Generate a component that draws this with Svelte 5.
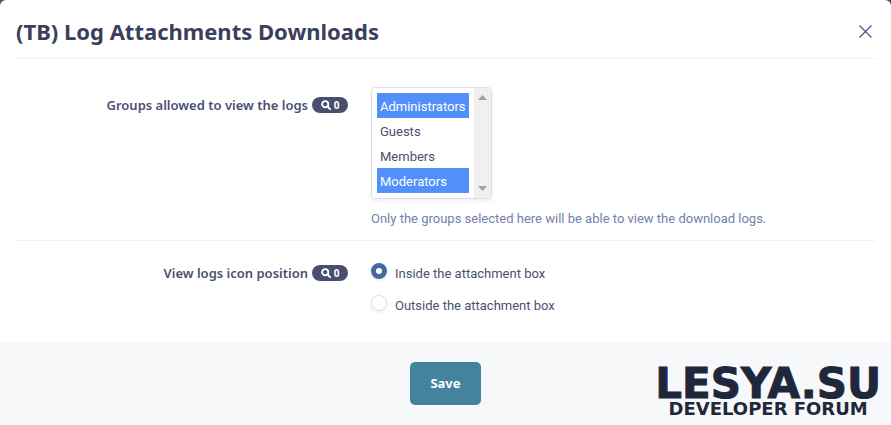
<script>
	let groups = ["Administrators", "Guests", "Members", "Moderators"];
	let selected = $state(["Administrators", "Moderators"]);
	let position = $state("inside");

	let positions = [
		{ value: "inside", label: "Inside the attachment box" },
		{ value: "outside", label: "Outside the attachment box" }
	];
</script>

{#snippet badge()}
	<span class="badge">
		<svg width="10" height="10" viewBox="0 0 10 10" aria-hidden="true">
			<circle cx="4.2" cy="4.2" r="3.1" fill="none" stroke="#fff" stroke-width="1.9" />
			<path d="M6.4 6.4 9.1 9.1" stroke="#fff" stroke-width="2" stroke-linecap="round" />
		</svg>0
	</span>
{/snippet}

<main>
	<form class="dialog" onsubmit={(e) => e.preventDefault()}>
		<header>
			<h1>(TB) Log Attachments Downloads</h1>
			<button type="button" class="close" aria-label="Close">
				<svg width="15" height="15" viewBox="0 0 15 15">
					<path d="M1.5 1.5 13.5 13.5M13.5 1.5 1.5 13.5" fill="none" stroke="#4f568a" stroke-width="1.3" />
				</svg>
			</button>
		</header>

		<div class="row">
			<div class="label">
				<label for="groups">Groups allowed to view the logs</label>
				{@render badge()}
			</div>
			<div class="field">
				<div class="listbox">
					<select id="groups" multiple size="4" bind:value={selected}>
						{#each groups as group}
							<option value={group}>{group}</option>
						{/each}
					</select>
					<div class="track" aria-hidden="true">
						<svg width="9" height="5" viewBox="0 0 9 5"><path d="M0 5 4.5 0 9 5z" fill="#a3a3a3" /></svg>
						<svg width="9" height="5" viewBox="0 0 9 5"><path d="M0 0 4.5 5 9 0z" fill="#a3a3a3" /></svg>
					</div>
				</div>
				<p class="hint">Only the groups selected here will be able to view the download logs.</p>
			</div>
		</div>

		<div class="row last">
			<div class="label">
				<span id="position-label">View logs icon position</span>
				{@render badge()}
			</div>
			<div class="field radios" role="radiogroup" aria-labelledby="position-label">
				{#each positions as item}
					<label class="radio">
						<input type="radio" name="position" value={item.value} bind:group={position} />
						<span>{item.label}</span>
					</label>
				{/each}
			</div>
		</div>

		<footer>
			<button type="submit" class="save">Save</button>
		</footer>
	</form>

	<div class="watermark">
		<strong>LESYA.SU</strong>
		<span>DEVELOPER FORUM</span>
	</div>
</main>

<style>
	:global(body) {
		background: #3d5174;
	}

	main {
		position: relative;
		font-family: "Noto Sans", "Open Sans", sans-serif;
		font-size: 13px;
		line-height: 20px;
		color: #4a5073;
	}

	.dialog {
		background: #fff;
		border-radius: 6px 6px 0 0;
		overflow: hidden;
	}

	header {
		display: flex;
		align-items: center;
		justify-content: space-between;
		height: 59px;
		margin: 0 15px;
		padding: 4px 0 0 1px;
		box-sizing: border-box;
		border-bottom: 1px solid #f1f2f4;
	}

	h1 {
		margin: 0;
		font-size: 22px;
		line-height: 30px;
		font-weight: 700;
		color: #3a3f5c;
	}

	.close {
		display: flex;
		padding: 3px;
		border: 0;
		background: none;
		cursor: pointer;
	}

	.row {
		display: flex;
		gap: 23px;
		margin: 0 15px;
		padding: 28px 0 11px;
		border-bottom: 1px solid #f1f2f4;
	}

	.last {
		padding: 20px 0 28px;
		border-bottom: 0;
	}

	.label {
		display: flex;
		justify-content: flex-end;
		align-items: center;
		align-self: flex-start;
		gap: 4px;
		width: 333px;
		flex: 0 1 auto;
		padding-top: 8px;
		font-weight: 600;
	}

	.last .label {
		padding-top: 2px;
	}

	.badge {
		display: flex;
		align-items: center;
		justify-content: center;
		gap: 3px;
		width: 36px;
		height: 16px;
		border-radius: 8px;
		background: #484e6d;
		color: #fff;
		font-size: 10px;
		font-weight: 700;
	}

	.field {
		flex: 1;
		font-family: Roboto, "Noto Sans", sans-serif;
	}

	.listbox {
		display: inline-flex;
		width: 121px;
		height: 112px;
		box-sizing: border-box;
		border: 1px solid #dcdfec;
		border-radius: 4px;
		overflow: hidden;
		box-shadow: 0 2px 4px rgba(60, 70, 120, 0.08);
		vertical-align: top;
	}

	select {
		flex: 1;
		min-width: 0;
		padding: 5px;
		border: 0;
		outline: 0;
		background: #fff;
		color: #4a5073;
		font: inherit;
		overflow: hidden;
	}

	option {
		height: 25px;
		min-height: 0;
		padding: 6px 3px 4px;
		box-sizing: border-box;
	}

	option:checked {
		background: #5190fb linear-gradient(#5190fb, #5190fb);
		color: #fff;
		-webkit-text-fill-color: #fff;
	}

	.track {
		display: flex;
		flex-direction: column;
		align-items: center;
		justify-content: space-between;
		width: 17px;
		padding: 7px 0;
		box-sizing: border-box;
		background: #f0f0f0;
	}

	.hint {
		margin: 10px 0 0;
		color: #7480ae;
	}

	.radios {
		display: flex;
		flex-direction: column;
		gap: 11px;
	}

	.radio {
		display: flex;
		align-items: flex-start;
		gap: 8px;
	}

	.radio span {
		padding-top: 5px;
		line-height: 16px;
	}

	input {
		appearance: none;
		width: 16px;
		height: 16px;
		margin: 2px 0 0;
		box-sizing: border-box;
		border: 1px solid #dcdfec;
		border-radius: 50%;
		background: #fff;
		box-shadow: 0 2px 4px rgba(60, 70, 120, 0.08);
	}

	input:checked {
		border: 5px solid #47699c;
	}

	footer {
		display: flex;
		justify-content: center;
		padding: 20px;
		background: #f6f8fa;
	}

	.save {
		padding: 12px 20px;
		border: 0;
		border-radius: 5px;
		background: #44829d;
		color: #fff;
		font: inherit;
		line-height: 19px;
		font-weight: 700;
		cursor: pointer;
	}

	.watermark {
		position: absolute;
		right: 10px;
		bottom: 8px;
		display: flex;
		flex-direction: column;
		align-items: center;
		font-family: "DejaVu Sans", sans-serif;
		font-weight: 700;
		color: #1f273b;
		pointer-events: none;
	}

	.watermark strong {
		font-size: 42px;
		line-height: 34px;
		-webkit-text-stroke: 1px #1f273b;
	}

	.watermark span {
		font-size: 18px;
		line-height: 16px;
	}
</style>
